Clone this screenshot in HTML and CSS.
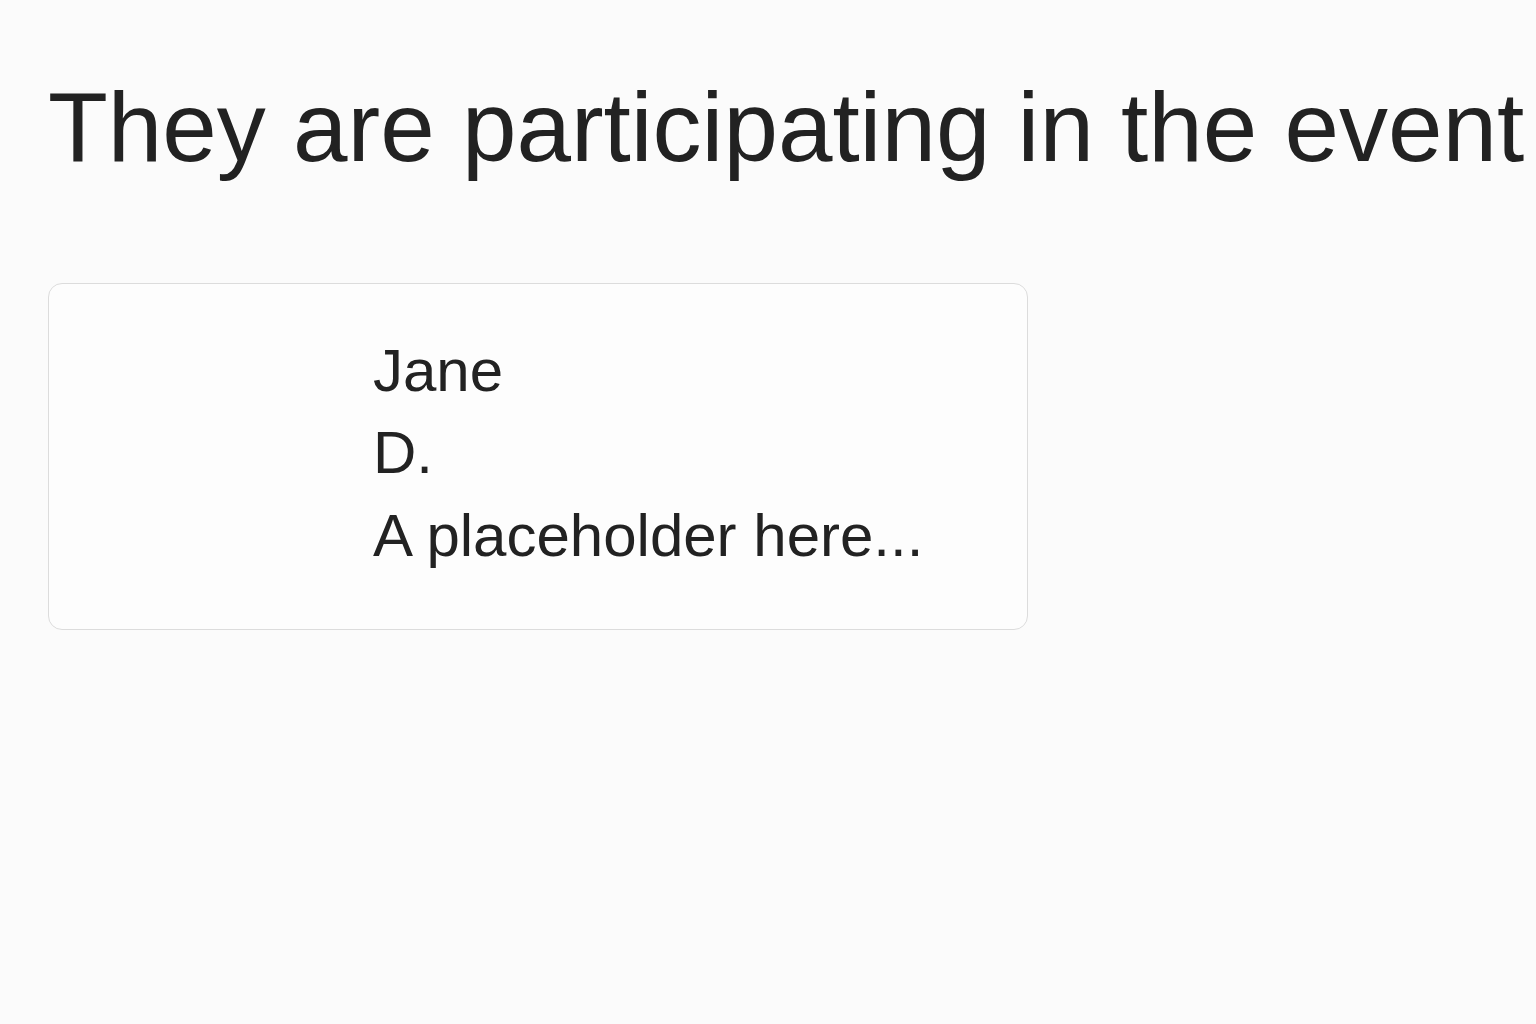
FILE: index.html
```html
<!DOCTYPE html>
<html lang="en">
<head>
    <meta charset="UTF-8">
    <meta name="viewport" content="width=device-width, initial-scale=1.0">
    <title>Participants</title>
    <link rel="stylesheet" href="styles.css">
</head>
<body>

<div class="page">
    <h1 class="title">They are participating in the event</h1>

    <div class="participant-card">
        <div class="participant-info">
            <div class="first-name">Jane</div>
            <div class="last-initial">D.</div>
            <div class="bio">A placeholder here...</div>
        </div>
    </div>
</div>

</body>
</html>
```

FILE: styles.css
```css
body {
    background-color: #fbfbfb;
    color: #222;
    font-family: 'Liberation Sans', Arial, sans-serif;
    margin: 0;
    overflow-x: hidden; /* Heading runs to the edge */
}
.page {
    padding: 69px 0 0 48px;
}
.title {
    font-size: 98px;
    font-weight: 400;
    line-height: 1.2;
    margin: 0 0 96px 0;
    white-space: nowrap;
}
.participant-card {
    width: 980px;
    box-sizing: border-box;
    background-color: #fdfdfd;
    border: 1px solid #dcdcdc;
    border-radius: 14px;
    padding: 46px 20px 51px 324px;
}
.participant-info {
    font-size: 60px;
    line-height: 82.8px;
}
```
